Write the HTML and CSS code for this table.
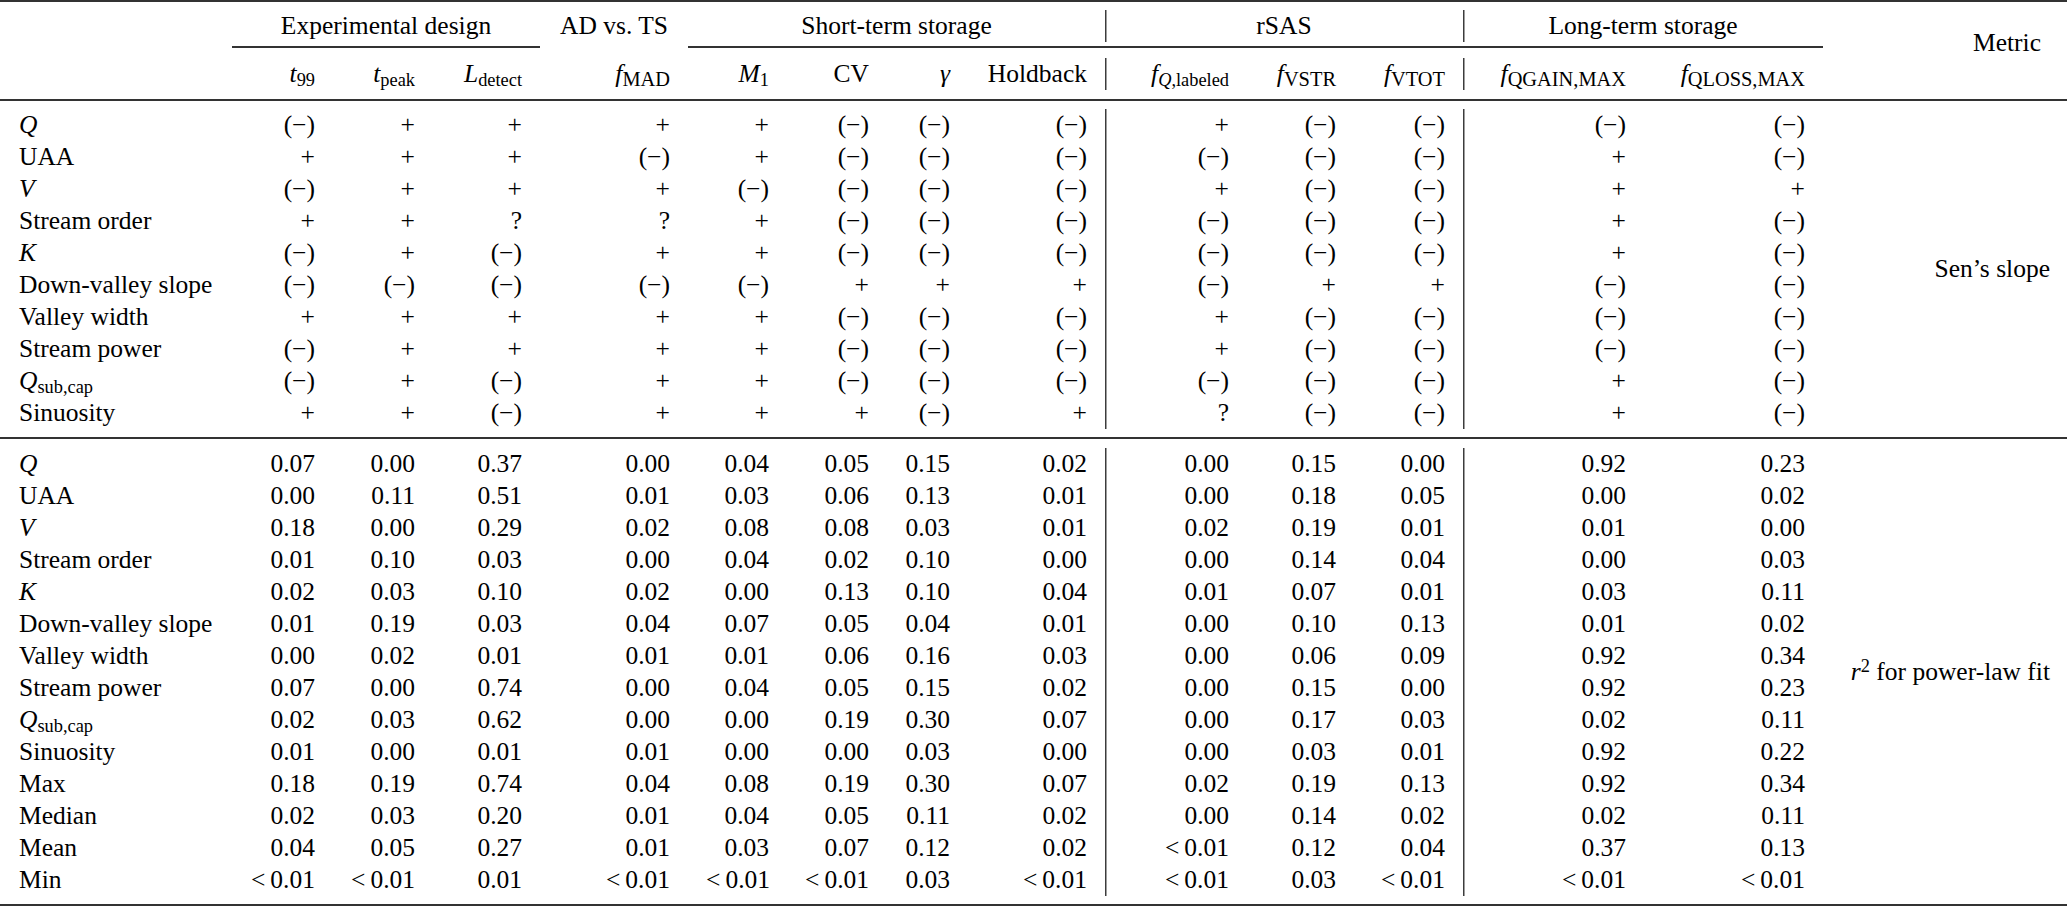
FILE: index.html
```html
<!DOCTYPE html>
<html lang="en">
<head>
<meta charset="utf-8">
<title>Table</title>
<link rel="stylesheet" href="styles.css">
</head>
<body>
<table class="tbl">
<colgroup>
<col class="c1"><col class="c2"><col class="c3"><col class="c4"><col class="c5"><col class="c6"><col class="c7"><col class="c8"><col class="c9"><col class="c10"><col class="c11"><col class="c12"><col class="c13"><col class="c14"><col class="c15">
</colgroup>
<tbody>
<tr class="rule"><td colspan="15"></td></tr>
<tr class="gap g8"><td colspan="15"></td></tr>
<tr class="head">
<td></td>
<td colspan="3" class="ctr">Experimental design</td>
<td class="ctr">AD vs. TS</td>
<td colspan="4" class="ctr">Short-term storage</td>
<td colspan="3" class="ctr vl">rSAS</td>
<td colspan="2" class="ctr vl">Long-term storage</td>
<td rowspan="5" class="metric-head">Metric</td>
</tr>
<tr class="gap g4"><td colspan="14"></td></tr>
<tr class="cmid"><td></td><td colspan="3" class="line"></td><td></td><td colspan="9" class="line"></td></tr>
<tr class="gap g10"><td colspan="14"></td></tr>
<tr class="head">
<td></td>
<td><i>t</i><span class="sub">99</span></td>
<td><i>t</i><span class="sub">peak</span></td>
<td><i>L</i><span class="sub">detect</span></td>
<td><i>f</i><span class="sub cap">MAD</span></td>
<td><i>M</i><span class="sub">1</span></td>
<td>CV</td>
<td><i>γ</i></td>
<td>Holdback</td>
<td class="vl"><i>f</i><span class="sub"><i>Q</i>,labeled</span></td>
<td><i>f</i><span class="sub cap">VSTR</span></td>
<td><i>f</i><span class="sub cap">VTOT</span></td>
<td class="vl"><i>f</i><span class="sub cap">QGAIN,MAX</span></td>
<td><i>f</i><span class="sub cap">QLOSS,MAX</span></td>
</tr>
<tr class="gap g9"><td colspan="15"></td></tr>
<tr class="rule"><td colspan="15"></td></tr>
<tr class="gap g8"><td colspan="15"></td></tr>

<tr><td class="lbl"><i>Q</i></td><td>(−)</td><td>+</td><td>+</td><td>+</td><td>+</td><td>(−)</td><td>(−)</td><td>(−)</td><td class="vl">+</td><td>(−)</td><td>(−)</td><td class="vl">(−)</td><td>(−)</td><td rowspan="10" class="metric">Sen’s slope</td></tr>
<tr><td class="lbl">UAA</td><td>+</td><td>+</td><td>+</td><td>(−)</td><td>+</td><td>(−)</td><td>(−)</td><td>(−)</td><td class="vl">(−)</td><td>(−)</td><td>(−)</td><td class="vl">+</td><td>(−)</td></tr>
<tr><td class="lbl"><i>V</i></td><td>(−)</td><td>+</td><td>+</td><td>+</td><td>(−)</td><td>(−)</td><td>(−)</td><td>(−)</td><td class="vl">+</td><td>(−)</td><td>(−)</td><td class="vl">+</td><td>+</td></tr>
<tr><td class="lbl">Stream order</td><td>+</td><td>+</td><td>?</td><td>?</td><td>+</td><td>(−)</td><td>(−)</td><td>(−)</td><td class="vl">(−)</td><td>(−)</td><td>(−)</td><td class="vl">+</td><td>(−)</td></tr>
<tr><td class="lbl"><i>K</i></td><td>(−)</td><td>+</td><td>(−)</td><td>+</td><td>+</td><td>(−)</td><td>(−)</td><td>(−)</td><td class="vl">(−)</td><td>(−)</td><td>(−)</td><td class="vl">+</td><td>(−)</td></tr>
<tr><td class="lbl">Down-valley slope</td><td>(−)</td><td>(−)</td><td>(−)</td><td>(−)</td><td>(−)</td><td>+</td><td>+</td><td>+</td><td class="vl">(−)</td><td>+</td><td>+</td><td class="vl">(−)</td><td>(−)</td></tr>
<tr><td class="lbl">Valley width</td><td>+</td><td>+</td><td>+</td><td>+</td><td>+</td><td>(−)</td><td>(−)</td><td>(−)</td><td class="vl">+</td><td>(−)</td><td>(−)</td><td class="vl">(−)</td><td>(−)</td></tr>
<tr><td class="lbl">Stream power</td><td>(−)</td><td>+</td><td>+</td><td>+</td><td>+</td><td>(−)</td><td>(−)</td><td>(−)</td><td class="vl">+</td><td>(−)</td><td>(−)</td><td class="vl">(−)</td><td>(−)</td></tr>
<tr><td class="lbl"><i>Q</i><span class="sub">sub,cap</span></td><td>(−)</td><td>+</td><td>(−)</td><td>+</td><td>+</td><td>(−)</td><td>(−)</td><td>(−)</td><td class="vl">(−)</td><td>(−)</td><td>(−)</td><td class="vl">+</td><td>(−)</td></tr>
<tr><td class="lbl">Sinuosity</td><td>+</td><td>+</td><td>(−)</td><td>+</td><td>+</td><td>+</td><td>(−)</td><td>+</td><td class="vl">?</td><td>(−)</td><td>(−)</td><td class="vl">+</td><td>(−)</td></tr>

<tr class="gap g8"><td colspan="15"></td></tr>
<tr class="rule"><td colspan="15"></td></tr>
<tr class="gap g9"><td colspan="15"></td></tr>

<tr><td class="lbl"><i>Q</i></td><td>0.07</td><td>0.00</td><td>0.37</td><td>0.00</td><td>0.04</td><td>0.05</td><td>0.15</td><td>0.02</td><td class="vl">0.00</td><td>0.15</td><td>0.00</td><td class="vl">0.92</td><td>0.23</td><td rowspan="14" class="metric"><i>r</i><span class="sup">2</span> for power-law fit</td></tr>
<tr><td class="lbl">UAA</td><td>0.00</td><td>0.11</td><td>0.51</td><td>0.01</td><td>0.03</td><td>0.06</td><td>0.13</td><td>0.01</td><td class="vl">0.00</td><td>0.18</td><td>0.05</td><td class="vl">0.00</td><td>0.02</td></tr>
<tr><td class="lbl"><i>V</i></td><td>0.18</td><td>0.00</td><td>0.29</td><td>0.02</td><td>0.08</td><td>0.08</td><td>0.03</td><td>0.01</td><td class="vl">0.02</td><td>0.19</td><td>0.01</td><td class="vl">0.01</td><td>0.00</td></tr>
<tr><td class="lbl">Stream order</td><td>0.01</td><td>0.10</td><td>0.03</td><td>0.00</td><td>0.04</td><td>0.02</td><td>0.10</td><td>0.00</td><td class="vl">0.00</td><td>0.14</td><td>0.04</td><td class="vl">0.00</td><td>0.03</td></tr>
<tr><td class="lbl"><i>K</i></td><td>0.02</td><td>0.03</td><td>0.10</td><td>0.02</td><td>0.00</td><td>0.13</td><td>0.10</td><td>0.04</td><td class="vl">0.01</td><td>0.07</td><td>0.01</td><td class="vl">0.03</td><td>0.11</td></tr>
<tr><td class="lbl">Down-valley slope</td><td>0.01</td><td>0.19</td><td>0.03</td><td>0.04</td><td>0.07</td><td>0.05</td><td>0.04</td><td>0.01</td><td class="vl">0.00</td><td>0.10</td><td>0.13</td><td class="vl">0.01</td><td>0.02</td></tr>
<tr><td class="lbl">Valley width</td><td>0.00</td><td>0.02</td><td>0.01</td><td>0.01</td><td>0.01</td><td>0.06</td><td>0.16</td><td>0.03</td><td class="vl">0.00</td><td>0.06</td><td>0.09</td><td class="vl">0.92</td><td>0.34</td></tr>
<tr><td class="lbl">Stream power</td><td>0.07</td><td>0.00</td><td>0.74</td><td>0.00</td><td>0.04</td><td>0.05</td><td>0.15</td><td>0.02</td><td class="vl">0.00</td><td>0.15</td><td>0.00</td><td class="vl">0.92</td><td>0.23</td></tr>
<tr><td class="lbl"><i>Q</i><span class="sub">sub,cap</span></td><td>0.02</td><td>0.03</td><td>0.62</td><td>0.00</td><td>0.00</td><td>0.19</td><td>0.30</td><td>0.07</td><td class="vl">0.00</td><td>0.17</td><td>0.03</td><td class="vl">0.02</td><td>0.11</td></tr>
<tr><td class="lbl">Sinuosity</td><td>0.01</td><td>0.00</td><td>0.01</td><td>0.01</td><td>0.00</td><td>0.00</td><td>0.03</td><td>0.00</td><td class="vl">0.00</td><td>0.03</td><td>0.01</td><td class="vl">0.92</td><td>0.22</td></tr>
<tr><td class="lbl">Max</td><td>0.18</td><td>0.19</td><td>0.74</td><td>0.04</td><td>0.08</td><td>0.19</td><td>0.30</td><td>0.07</td><td class="vl">0.02</td><td>0.19</td><td>0.13</td><td class="vl">0.92</td><td>0.34</td></tr>
<tr><td class="lbl">Median</td><td>0.02</td><td>0.03</td><td>0.20</td><td>0.01</td><td>0.04</td><td>0.05</td><td>0.11</td><td>0.02</td><td class="vl">0.00</td><td>0.14</td><td>0.02</td><td class="vl">0.02</td><td>0.11</td></tr>
<tr><td class="lbl">Mean</td><td>0.04</td><td>0.05</td><td>0.27</td><td>0.01</td><td>0.03</td><td>0.07</td><td>0.12</td><td>0.02</td><td class="vl">&lt;&thinsp;0.01</td><td>0.12</td><td>0.04</td><td class="vl">0.37</td><td>0.13</td></tr>
<tr><td class="lbl">Min</td><td>&lt;&thinsp;0.01</td><td>&lt;&thinsp;0.01</td><td>0.01</td><td>&lt;&thinsp;0.01</td><td>&lt;&thinsp;0.01</td><td>&lt;&thinsp;0.01</td><td>0.03</td><td>&lt;&thinsp;0.01</td><td class="vl">&lt;&thinsp;0.01</td><td>0.03</td><td>&lt;&thinsp;0.01</td><td class="vl">&lt;&thinsp;0.01</td><td>&lt;&thinsp;0.01</td></tr>

<tr class="gap g8"><td colspan="15"></td></tr>
<tr class="rule"><td colspan="15"></td></tr>
</tbody>
</table>
</body>
</html>
```

FILE: styles.css
```css
html, body {
  margin: 0;
  padding: 0;
  background: #ffffff;
}

body {
  font-family: "Liberation Serif", "Times New Roman", serif;
  font-size: 25.5px;
  color: #000000;
}

.tbl {
  border-collapse: separate;
  border-spacing: 0;
  table-layout: fixed;
  width: 2067px;
}

.c1 { width: 232px; }
.c2 { width: 101px; }
.c3 { width: 100px; }
.c4 { width: 107px; }
.c5 { width: 148px; }
.c6 { width: 99px; }
.c7 { width: 100px; }
.c8 { width: 81px; }
.c9 { width: 137px; }
.c10 { width: 142px; }
.c11 { width: 107px; }
.c12 { width: 109px; }
.c13 { width: 181px; }
.c14 { width: 179px; }
.c15 { width: 244px; }

.tbl td {
  padding: 0 18px;
  height: 32px;
  line-height: 32px;
  text-align: right;
  white-space: nowrap;
  vertical-align: middle;
  overflow: visible;
}

.tbl td.lbl {
  text-align: left;
  padding-left: 19px;
}

.tbl td.ctr {
  text-align: center;
}

.tbl td.vl {
  box-shadow: inset 1.5px 0 0 #3c3c3c;
}

.tbl td.metric-head {
  text-align: right;
  vertical-align: top;
  padding-right: 26px;
  padding-top: 17px;
}

.tbl td.metric {
  text-align: right;
  padding-right: 17px;
}

.tbl tr.rule td {
  height: 2px;
  padding: 0;
  line-height: 0;
  font-size: 0;
  background: #333333;
}

.tbl tr.cmid td {
  height: 1.5px;
  padding: 0;
  line-height: 0;
  font-size: 0;
}

.tbl tr.cmid td.line {
  background: #333333;
}

.tbl tr.gap td {
  padding: 0;
  line-height: 0;
  font-size: 0;
}

.tbl tr.g4 td { height: 4px; }
.tbl tr.g8 td { height: 8px; }
.tbl tr.g9 td { height: 9px; }
.tbl tr.g10 td { height: 10px; }

.sub {
  font-size: 0.72em;
  line-height: 0;
  vertical-align: -0.22em;
}

.sub.cap {
  font-size: 0.8em;
}

.sup {
  font-size: 0.72em;
  line-height: 0;
  vertical-align: 0.45em;
}
```
